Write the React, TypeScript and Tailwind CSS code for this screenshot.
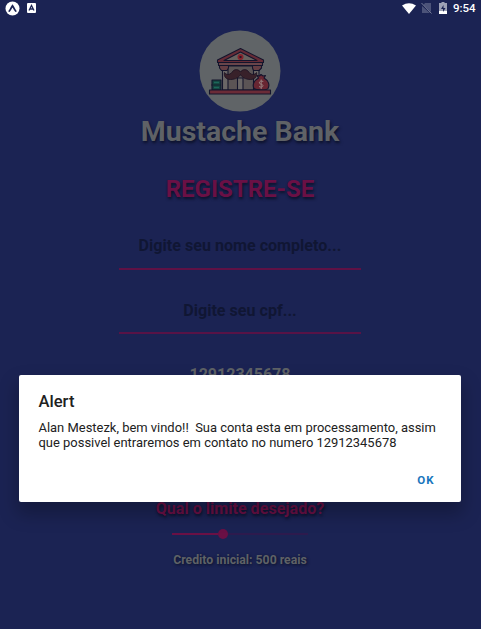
function BankLogo() {
  return (
    <svg className="h-[82px] w-[82px] shrink-0" viewBox="0 0 82 82">
      <circle cx="41" cy="41" r="40.5" fill="#606467" />
      {/* facade and columns */}
      <g stroke="#14142c" strokeWidth="1.1" strokeLinejoin="round">
        <path d="M25 36H58V60H25Z" fill="#5b5455" />
        <path d="M23.500 39H29V60H23.500ZM38.500 48H44V60H38.500ZM54.500 39H60V60H54.500Z" fill="#6a6666" />
        <path d="M20.500 35.500H29.500V38L28 40.500H22.500L20.500 38ZM53.500 35.500H62.500V38L60 40.500H54.500L53.500 38Z" fill="#643d43" />
        <path d="M41.500 18.500L18.500 30V32.500H64.500V30Z" fill="#652b36" />
        <path d="M41.500 22L25 30.500H58Z" fill="#67625f" />
        <path d="M19.500 32.500H63.500V35.500H19.500Z" fill="#69454a" />
        <path d="M13 50H22V60H13Z" fill="#14423e" />
        <path d="M59.500 48L58 45.500L60.500 46L62 44.500L64 46L66.500 45.500L65 48C69.500 50.500 71 55 69 58.500C67.500 60.500 57 60.500 55 58.500C53 55 55 50.500 59.500 48Z" fill="#692632" />
        <path d="M10.500 60H71.500V64H10.500Z" fill="#6b2b37" />
      </g>
      <path d="M12 55H22" fill="none" stroke="#14142c" strokeWidth=".7" />
      <path d="M15 52.500H20M15 57.500H20" stroke="#1c675a" strokeWidth="1.500" />
      <circle cx="41.500" cy="27" r="3" fill="#85232c" />
      <rect x="40.500" y="26" width="2" height="2" fill="#25182b" />
      <path d="M41.500 42C39.500 39 36 39 34 41C31.500 44.500 28.500 46 25.500 42.500C24.500 47 27.500 49.500 31.500 49.500C36.500 49.500 40.500 47 41.500 44.500C42.500 47 46.500 49.500 51.500 49.500C55.500 49.500 58.500 47 57.500 42.500C54.500 46 51.500 44.500 49 41C47 39 43.500 39 41.500 42Z" fill="#38212a" stroke="#1a1223" strokeWidth=".8" />
      <path d="M64.300 51.500C62 50.500 60 51.500 60.300 53C60.800 54.500 64 54 64 55.700C64 57.300 61.500 57.500 60 56.500M62.200 49.500V59" fill="none" stroke="#97807e" strokeWidth="1" />
    </svg>
  );
}

function StatusBar() {
  return (
    <header className="flex h-4 w-[481px] shrink-0 items-center pr-[5px] pl-[5px] text-white">
      <svg className="h-[15px] w-[15px]" viewBox="0 0 15 15">
        <circle cx="7.500" cy="7.500" r="7" fill="currentColor" />
        <path d="M4.300 10C5.700 8.500 6.300 6.300 7.500 4.800C8.700 6.300 9.300 8.500 10.700 10" fill="none" stroke="#1b2353" strokeWidth="1.800" strokeLinecap="round" />
      </svg>
      <svg className="ml-[7px] h-[10px] w-[9px]" viewBox="0 0 9 10">
        <rect width="9" height="10" rx="1" fill="currentColor" />
        <path d="M2 7.500L4.500 2.500L7 7.500M3 6H6" fill="none" stroke="#1b2353" strokeWidth="1.300" />
      </svg>
      <div className="ml-auto flex items-center">
        <svg className="h-[11px] w-[14px]" viewBox="0 0 14 11">
          <path d="M0 2.500Q7-2 14 2.500L7 11Z" fill="currentColor" />
        </svg>
        <svg className="ml-[5px] h-[12px] w-[11px]" viewBox="0 0 11 12">
          <path d="M4 1H10V10L2.500 3ZM1 4L9 11H1Z" fill="#4c5379" />
          <path d="M.5 1L10.500 11.500" stroke="#777c98" />
        </svg>
        <svg className="ml-[7px] h-[12px] w-[8px]" viewBox="0 0 8 12">
          <path d="M0 1H2.500V0H5.500V1H8V12H0Z" fill="#9da1b5" />
          <path d="M0 9H8V12H0Z" fill="currentColor" />
          <path d="M4.500 3L2 7H4V10L6.500 6H4.500Z" fill="#1b2353" />
        </svg>
        <span className="ml-[6px] w-[23px] text-[11.500px] leading-4 font-medium whitespace-nowrap">9:54</span>
      </div>
    </header>
  );
}

export default function App() {
  return (
    <div className="relative flex h-[629px] w-[481px] flex-col overflow-hidden bg-[#1b2353] font-['Roboto',sans-serif]">
      <StatusBar />
      <main className="flex w-[480px] flex-col items-center pt-[14px] whitespace-nowrap">
        <BankLogo />
        <h1 className="mt-1 text-[28.500px] leading-8 font-bold text-[#5f6266] [text-shadow:1px_2px_3px_#0b1028]">Mustache Bank</h1>
        <h2 className="mt-[27px] text-[24px] leading-7 font-bold text-[#6a1045] [text-shadow:1px_2px_3px_#0b1028]">REGISTRE-SE</h2>
        <div className="mt-[33px] h-[34px] w-[242px] border-b-2 border-[#5f1145] text-center text-[16.100px] leading-5 font-bold text-[#101633]">Digite seu nome completo...</div>
        <div className="mt-[31px] h-[33px] w-[242px] border-b-2 border-[#581346] text-center text-[16.100px] leading-5 font-bold text-[#101633]">Digite seu cpf...</div>
        <div className="mt-[31px] h-[35px] w-[242px] border-b-2 border-[#6a1045] text-center text-[16px] leading-5 font-bold text-[#5f6266]">12912345678</div>
        <p className="mt-[99px] text-[16.100px] leading-5 font-bold text-[#6a1045] [text-shadow:1px_2px_3px_#0b1028]">Qual o limite desejado?</p>
        <div className="mt-[10px] flex h-[10px] w-[136px] items-center">
          <div className="h-[2px] w-[46px] bg-[#6a1045]" />
          <div className="h-[10px] w-[10px] rounded-full bg-[#6a1045]" />
          <div className="h-[2px] flex-1 bg-[#2d1a4d]" />
        </div>
        <p className="mt-[13px] text-[12.250px] leading-4 font-bold text-[#5f6266] [text-shadow:1px_1px_3px_#0b1028]">Credito inicial: 500 reais</p>
      </main>
      <section role="alertdialog" className="absolute top-[375px] left-[19px] flex h-[127px] w-[442px] flex-col rounded-[2px] bg-white px-[19.500px] pt-[17px] text-[#212121] shadow-[0_10px_18px_2px_rgba(0,0,0,0.25)]">
        <h3 className="text-[16.600px] leading-5 font-medium">Alert</h3>
        <p className="mt-[8px] text-[12.940px] leading-[15px] whitespace-pre">{"Alan Mestezk, bem vindo!!  Sua conta esta em processamento, assim\nque possivel entraremos em contato no numero 12912345678"}</p>
        <button className="mt-[22px] mr-[7px] self-end text-[11.500px] leading-4 font-bold tracking-[1px] text-[#1976bd]">OK</button>
      </section>
    </div>
  );
}
